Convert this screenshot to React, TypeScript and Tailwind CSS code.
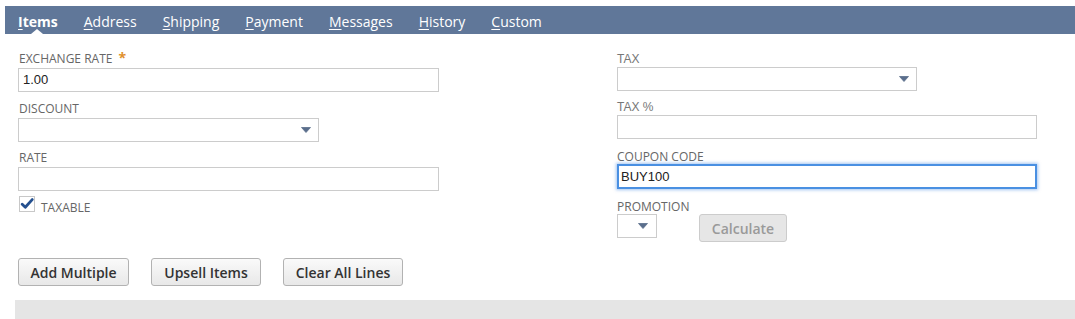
import React from "react";

const OS = "font-['Open_Sans',sans-serif]";
const AR = "font-['Liberation_Sans',Arial,sans-serif]";

function Arrow() {
  return (
    <svg width="10" height="6" viewBox="0 0 10 6" className="block">
      <path d="M0.5 0.5 H9.5 L5 5.5 Z" fill="#5a6e8c" stroke="#5a6e8c" strokeWidth="0.8" strokeLinejoin="round" />
    </svg>
  );
}

function Select({ w, pr = "pr-[7px]" }: { w: string; pr?: string }) {
  return (
    <div className={`${w} h-[24px] border border-[#cccccc] bg-white flex items-center justify-end ${pr}`}>
      <Arrow />
    </div>
  );
}

function Label({ children, cls = "" }: { children: React.ReactNode; cls?: string }) {
  return (
    <div className={`${OS} text-[12px] leading-[16px] h-[16px] text-[#666666] uppercase ${cls}`}>{children}</div>
  );
}

function Tab({ k, rest, bold }: { k: string; rest: string; bold?: boolean }) {
  return (
    <span className={`${OS} text-[14px] leading-[20px] text-white ${bold ? "font-bold" : ""}`}>
      <span className="underline underline-offset-[2px]">{k}</span>
      {rest}
    </span>
  );
}

function Button({ children, w }: { children: React.ReactNode; w: string }) {
  return (
    <button
      className={`${w} h-[28px] rounded-[3px] border border-[#b2b2b2] bg-gradient-to-b from-[#fafafa] to-[#e8e8e8] ${OS} text-[14px] font-semibold text-[#333333] flex items-center justify-center`}
    >
      {children}
    </button>
  );
}

export default function App() {
  return (
    <div className="w-[1075px] h-[319px] overflow-hidden bg-white">
      {/* Tab bar */}
      <div className="relative mt-[6px] ml-[5px] h-[28px] bg-[#607799] flex items-start pt-[6px] pl-[13px] gap-[26px]">
        <Tab k="I" rest="tems" bold />
        <Tab k="A" rest="ddress" />
        <Tab k="S" rest="hipping" />
        <Tab k="P" rest="ayment" />
        <Tab k="M" rest="essages" />
        <Tab k="H" rest="istory" />
        <Tab k="C" rest="ustom" />
        <svg className="absolute left-[26px] bottom-0" width="12" height="5" viewBox="0 0 12 5">
          <path d="M0 5 L6 0 L12 5 Z" fill="#ffffff" />
        </svg>
      </div>

      {/* Form */}
      <div className="flex items-start mt-[17px] pl-[18px]">
        {/* Left column */}
        <div className="w-[599px] flex flex-col">
          <Label cls="pl-[1px] flex items-start">
            Exchange Rate
            <span className="ml-[6px] text-[#e0902c] text-[14px] leading-[14px] font-bold">*</span>
          </Label>
          <div className={`mt-[1px] w-[421px] h-[24px] border border-[#cccccc] flex items-center pl-[4px] ${AR} text-[13px] text-[#222222]`}>
            1.00
          </div>

          <Label cls="mt-[9px] pl-[1px]">Discount</Label>
          <div className="mt-[1px]">
            <Select w="w-[301px]" />
          </div>

          <Label cls="mt-[8px] pl-[1px]">Rate</Label>
          <div className="mt-[1px] w-[421px] h-[24px] border border-[#cccccc]" />

          <div className="mt-[5px] flex items-start pl-[1px]">
            <div className="w-[16px] h-[16px] border border-[#c8c8c8] bg-white flex items-center justify-center">
              <svg width="14" height="14" viewBox="0 0 14 14">
                <path d="M2.2 7.2 L5.3 10.2 L12.2 2.6" fill="none" stroke="#24508f" strokeWidth="2.8" strokeLinecap="round" strokeLinejoin="round" />
              </svg>
            </div>
            <div className={`${OS} ml-[6px] mt-[4px] text-[12px] leading-[16px] text-[#666666]`}>TAXABLE</div>
          </div>
        </div>

        {/* Right column */}
        <div className="flex flex-col">
          <div className={`${AR} text-[12px] leading-[16px] h-[16px] text-[#777777]`}>TAX</div>
          <Select w="w-[300px]" />

          <div className={`${AR} mt-[9px] text-[12px] leading-[15px] h-[15px] text-[#777777]`}>TAX %</div>
          <div className="w-[420px] h-[24px] border border-[#cccccc]" />

          <div className={`${OS} mt-[10px] text-[12px] leading-[15px] h-[15px] text-[#666666]`}>COUPON CODE</div>
          <div
            className={`w-[420px] h-[25px] border-2 border-[#4a90e2] shadow-[0_0_3px_1px_rgba(90,150,230,0.55)] flex items-center pl-[2px] ${AR} text-[13px] text-[#222222]`}
          >
            BUY100
          </div>

          <div className={`${OS} mt-[10px] text-[12px] leading-[15px] h-[15px] text-[#666666]`}>PROMOTION</div>
          <div className="flex items-start gap-[42px]">
            <Select w="w-[40px]" pr="pr-[8px]" />
            <div
              className={`w-[88px] h-[28px] rounded-[3px] border border-[#cccccc] bg-[#e6e6e6] ${OS} text-[14px] font-semibold text-[#9a9a9a] flex items-center justify-center`}
            >
              Calculate
            </div>
          </div>
        </div>
      </div>

      {/* Buttons */}
      <div className="mt-[16px] pl-[18px] flex gap-[22px]">
        <Button w="w-[111px]">Add Multiple</Button>
        <Button w="w-[110px]">Upsell Items</Button>
        <Button w="w-[120px]">Clear All Lines</Button>
      </div>

      {/* Gray bar */}
      <div className="mt-[14px] ml-[15px] h-[30px] bg-[#e5e5e5]" />
    </div>
  );
}
